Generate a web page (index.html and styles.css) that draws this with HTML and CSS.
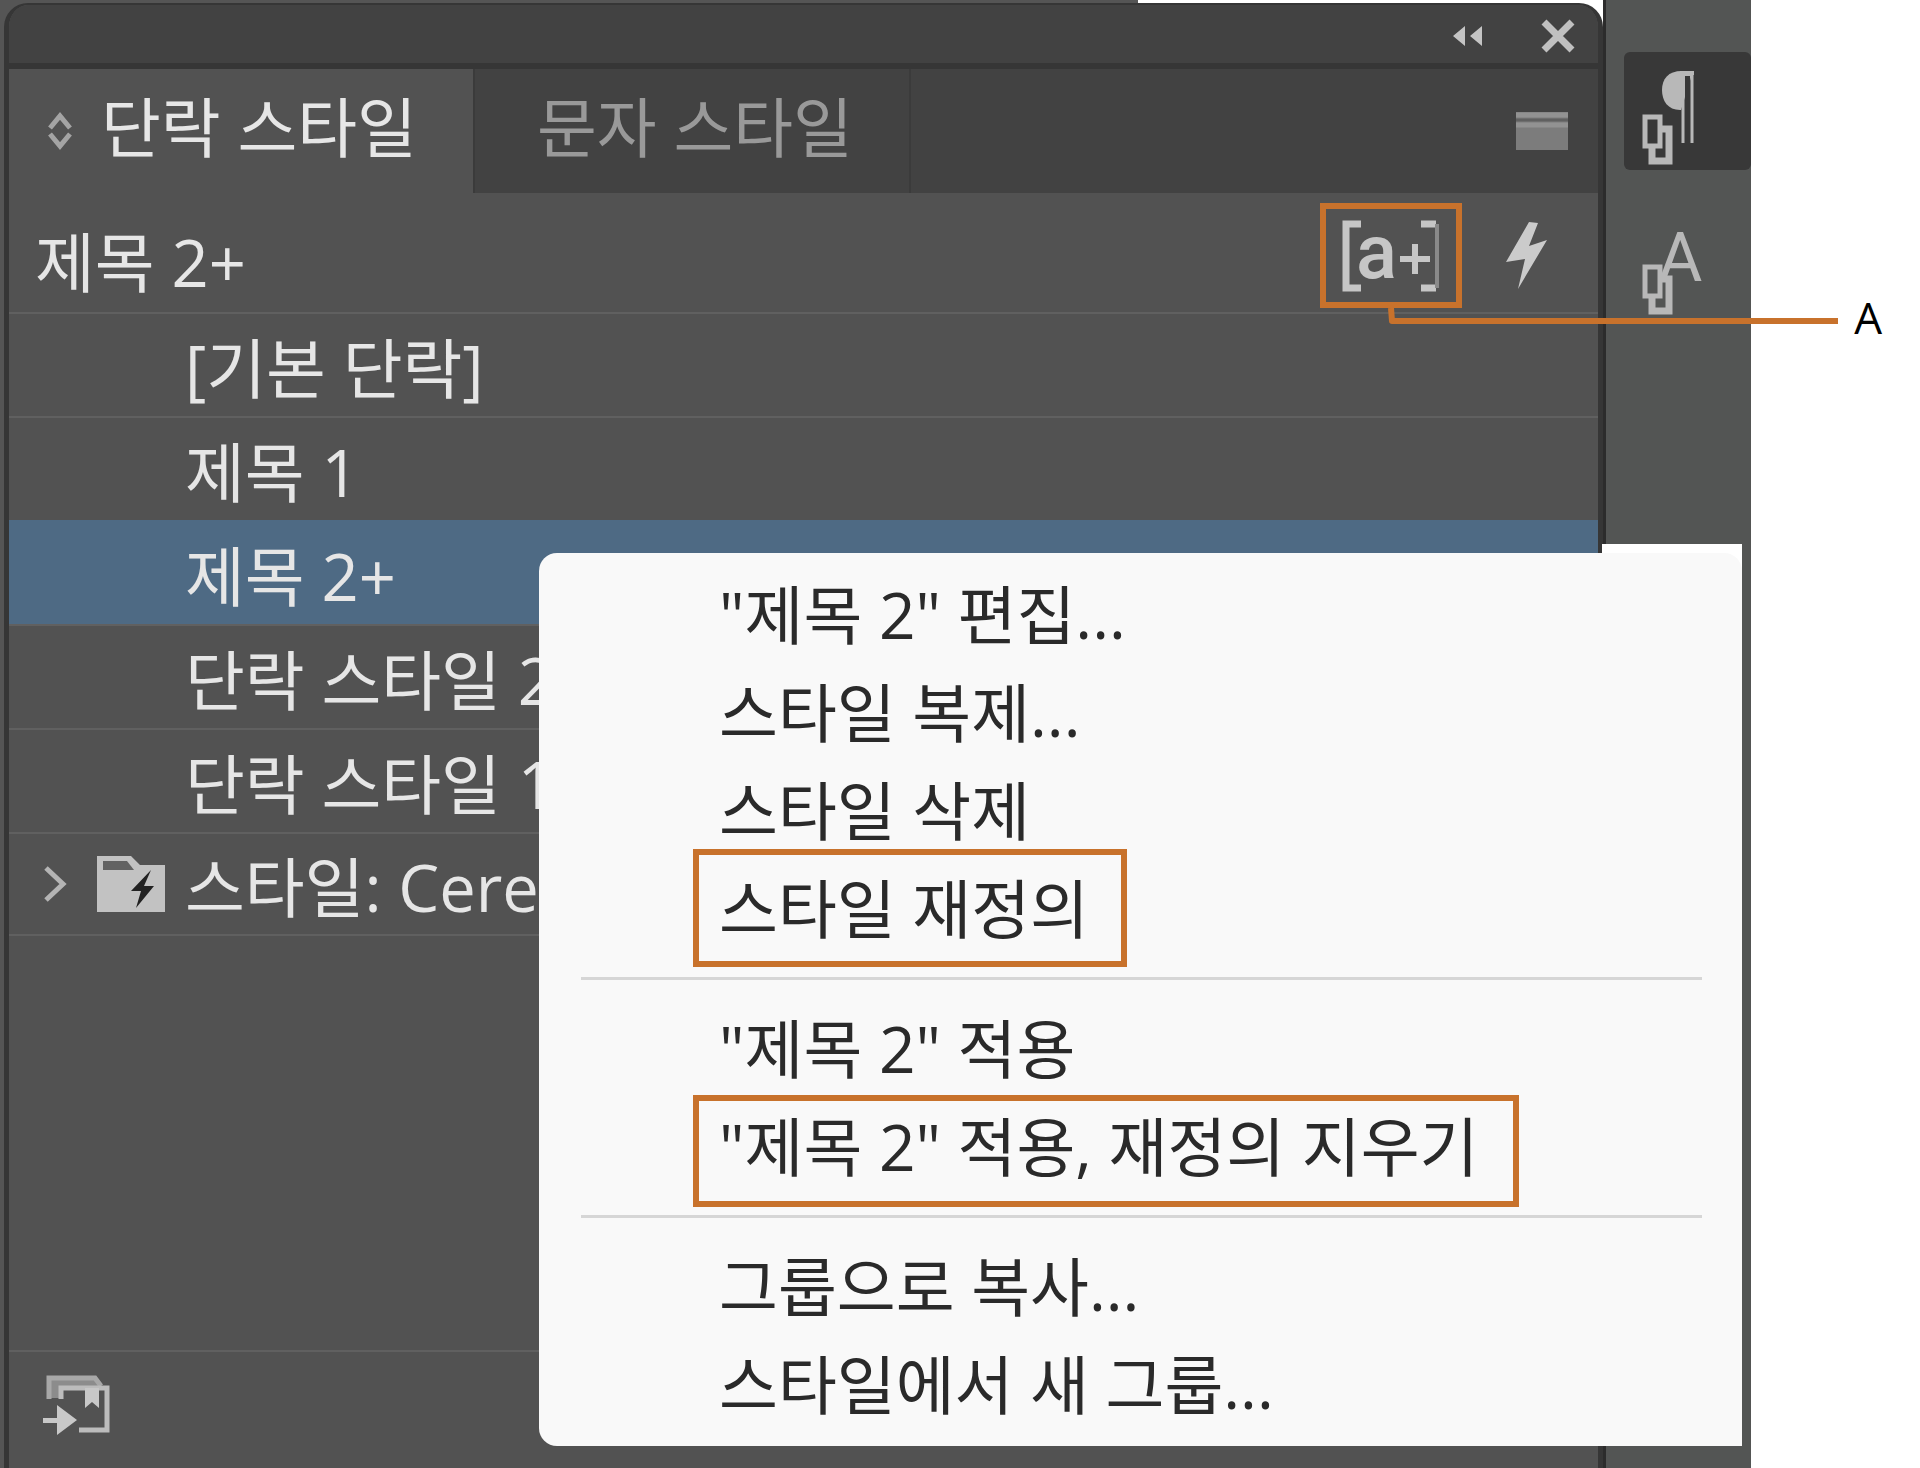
FILE: index.html
```html
<!DOCTYPE html>
<html lang="ko">
<head>
  <meta charset="UTF-8">
  <title>단락 스타일</title>
  <link rel="stylesheet" href="styles.css">
</head>
<body>
  <div class="workspace">
    <section class="panel">
      <header class="titlebar">
        <button aria-label="축소">
          <svg width="32" height="20" viewBox="0 0 32 20"><path d="M13 0v20L1 10zM30 0v20L18 10z" fill="#c4c4c4"/></svg>
        </button>
        <button aria-label="닫기">
          <svg width="36" height="34" viewBox="0 0 36 34"><path d="M4 3l28 28M32 3L4 31" stroke="#c0c0c0" stroke-width="7"/></svg>
        </button>
      </header>

      <nav class="tabs">
        <button class="tab active">
          <svg width="26" height="38" viewBox="0 0 26 38"><path d="M3 16L13 4l10 12M3 22l10 12 10-12" fill="none" stroke="#a4a4a4" stroke-width="5"/></svg>
          <span>단락 스타일</span>
        </button>
        <button class="tab"><span>문자 스타일</span></button>
        <button class="panel-menu" aria-label="패널 메뉴">
          <svg width="52" height="38" viewBox="0 0 52 38">
            <path d="M0 0h52v38H0z" fill="#7c7c7c"/>
            <path d="M0 3h52M0 13h52" stroke="#929292" stroke-width="5"/>
            <path d="M0 8h52" stroke="#606060" stroke-width="3"/>
          </svg>
        </button>
      </nav>

      <div class="current">
        <span class="current-name">제목 2+</span>
        <button class="override" aria-label="스타일 재정의 강조">
          <svg width="96" height="76" viewBox="0 0 96 76">
            <path d="M18 6H3v64h15M78 6h15M78 70h15" fill="none" stroke="#c6c6c6" stroke-width="7"/>
            <path d="M94 6v64" stroke="#8a8a8a" stroke-width="4"/>
            <path d="M57 41h30M72 26v30" stroke="#c6c6c6" stroke-width="6"/>
            <text x="13" y="60" class="icon-a">a</text>
          </svg>
        </button>
        <button class="quick" aria-label="빠른 적용">
          <svg width="42" height="68" viewBox="0 0 42 68"><path d="M23 0L0 40l19-3-7 30L41 18l-18 6L32 1z" fill="#cbcbcb"/></svg>
        </button>
      </div>

      <ul class="styles">
        <li><button>[기본 단락]</button></li>
        <li><button>제목 1</button></li>
        <li><button class="selected">제목 2+</button></li>
        <li><button>단락 스타일 2</button></li>
        <li><button>단락 스타일 1</button></li>
        <li>
          <button class="group">
            <svg class="chevron" width="24" height="38" viewBox="0 0 24 38"><path d="M3 3l17 16L3 35" fill="none" stroke="#b4b4b4" stroke-width="5"/></svg>
            <svg class="folder" width="68" height="56" viewBox="0 0 68 56">
              <path d="M0 0h34l9 9h25v47H0z" fill="#c2c2c2"/>
              <path d="M6 5h24l7 9H6z" fill="#626262"/>
              <path d="M54 14L34 35h10l-5 17 18-22H47z" fill="#222"/>
            </svg>
            스타일: Cerem
          </button>
        </li>
      </ul>

      <footer class="panel-footer">
        <button aria-label="CC 라이브러리에 추가">
          <svg width="68" height="62" viewBox="0 0 68 62">
            <path d="M6 24V4h46l6 8H17v12z" fill="#8c8c8c"/>
            <path d="M6 25V4h46l6 8" fill="none" stroke="#a8a8a8" stroke-width="5"/>
            <path d="M18 25V14h46v42H36" fill="none" stroke="#bcbcbc" stroke-width="5"/>
            <path d="M42 14h14v20l-7-6-7 6z" fill="#c8c8c8"/>
            <path d="M0 44h14V31l20 15-20 15V49H0z" fill="#c8c8c8"/>
          </svg>
        </button>
      </footer>
    </section>

    <aside class="dock">
      <button class="on" aria-label="단락 스타일">
        <svg width="60" height="104" viewBox="0 0 60 104">
          <path d="M53 6H42C28 6 22 14 22 25s6 20 18 20h1z" fill="#b8b8b8"/>
          <path d="M43 6v72M52 6v72" stroke="#b8b8b8" stroke-width="3"/>
          <path d="M40 8h14" stroke="#b8b8b8" stroke-width="4"/>
          <path d="M45 11h5v64h-5z" fill="#383838"/>
          <path d="M21 64h8v32H12V82" fill="none" stroke="#b8b8b8" stroke-width="7"/>
          <path d="M5 52h15v29H5z" fill="#383838" stroke="#b8b8b8" stroke-width="5"/>
        </svg>
      </button>
      <button aria-label="문자 스타일">
        <svg width="60" height="104" viewBox="0 0 60 104">
          <text x="18" y="66" class="dock-a">A</text>
          <path d="M21 64h8v32H12V82" fill="none" stroke="#b8b8b8" stroke-width="7"/>
          <path d="M5 52h15v29H5z" fill="#535554" stroke="#b8b8b8" stroke-width="5"/>
        </svg>
      </button>
    </aside>

    <!-- 오른쪽 클릭 메뉴 -->
    <div class="menu-backing"></div>
    <div class="menu">
      <button>"제목 2" 편집...</button>
      <button>스타일 복제...</button>
      <button>스타일 삭제</button>
      <button class="marked">스타일 재정의</button>
      <hr>
      <button>"제목 2" 적용</button>
      <button class="marked wide">"제목 2" 적용, 재정의 지우기</button>
      <hr>
      <button>그룹으로 복사...</button>
      <button>스타일에서 새 그룹...</button>
    </div>
  </div>

  <!-- 설명선 -->
  <div class="callout">
    <svg class="leader" width="450" height="20" viewBox="0 0 450 20"><path d="M3 0l1 13h446" fill="none" stroke="#c8722c" stroke-width="6" stroke-linejoin="round"/></svg>
    <span>A</span>
  </div>
</body>
</html>
```
FILE: styles.css
```css
* {
  box-sizing: border-box;
}

body {
  margin: 0;
  background: #fff;
  font-family: "Open Sans", "Noto Sans CJK KR", sans-serif;
  font-size: 64px;
  position: relative;
}

button {
  border: none;
  padding: 0;
  margin: 0;
  background: none;
  font: inherit;
  color: inherit;
  text-align: left;
  white-space: nowrap;
  cursor: pointer;
}

svg {
  display: block;
  flex: none;
  overflow: visible;
}

.workspace {
  position: relative;
  display: flex;
  min-height: 100vh;
  margin-right: 169px;
  background: linear-gradient(90deg, #555 65%, #fff 65%);
}

/* 패널 */
.panel {
  flex: 1;
  display: flex;
  flex-direction: column;
  margin: 3px 0 0 4px;
  background: #525252;
  border: solid #363636;
  border-width: 2px 5px 0;
  border-radius: 24px 24px 0 0;
  overflow: hidden;
  color: #e6e6e6;
  font-size: 65px;
}

.titlebar {
  height: 64px;
  display: flex;
  justify-content: flex-end;
  align-items: center;
  gap: 56px;
  padding: 4px 22px 0 0;
  background: #424242;
  border-bottom: 6px solid #363636;
}

.tabs {
  height: 124px;
  display: flex;
  background: #424242;
}

.tab {
  display: flex;
  align-items: center;
  gap: 28px;
  padding: 0 56px 0 62px;
  border-right: 2px solid #3b3b3b;
  color: #999;
}

.tab.active {
  padding-left: 38px;
  background: #525252;
  color: #e6e6e6;
}

.tab span {
  padding-bottom: 14px;
}

.panel-menu {
  margin-left: auto;
  margin-right: 30px;
}

.current {
  height: 119px;
  display: flex;
  align-items: center;
  padding: 6px 50px 0 26px;
}

.current-name {
  flex: 1;
  padding-top: 6px;
}

.override {
  width: 142px;
  height: 105px;
  display: flex;
  align-items: center;
  justify-content: center;
  border: 6px solid #c8722c;
}

.quick {
  margin-left: 44px;
}

.icon-a {
  font: 500 76px Roboto, sans-serif;
  fill: #c6c6c6;
}

.styles {
  list-style: none;
  margin: 0;
  padding: 0;
  flex: 1;
}

.styles button {
  width: 100%;
  height: 104px;
  display: flex;
  align-items: center;
  padding: 0 0 0 176px;
  border-top: 2px solid #606060;
}

.styles .selected {
  background: #4e6a84;
  border-top-color: #4e6a84;
}

.styles .group {
  padding: 0 0 0 34px;
  border-bottom: 2px solid #606060;
}

.folder {
  margin: 0 20px 0 30px;
}

.panel-footer {
  height: 118px;
  display: flex;
  align-items: flex-start;
  padding: 22px 34px;
  border-top: 2px solid #606060;
}

/* 오른쪽 아이콘 도크 */
.dock {
  width: 148px;
  display: flex;
  flex-direction: column;
  gap: 32px;
  padding: 52px 0 0 18px;
  background: #535554;
  border-left: 3px solid #2c2c2c;
}

.dock button {
  height: 118px;
  padding: 12px 0 0 16px;
  border-radius: 6px;
}

.dock .on {
  background: #383838;
}

.dock-a {
  font: 68px Roboto, sans-serif;
  fill: #b8b8b8;
}

/* 컨텍스트 메뉴 */
.menu-backing {
  position: absolute;
  top: 544px;
  right: 9px;
  width: 140px;
  height: 40px;
  background: #fff;
}

.menu {
  position: absolute;
  top: 553px;
  left: 539px;
  right: 9px;
  display: flex;
  flex-direction: column;
  align-items: flex-start;
  padding: 12px 40px 13px 180px;
  background: #f9f9f9;
  border-radius: 18px 18px 0 18px;
  color: #2a2a2a;
}

.menu button {
  position: relative;
  height: 98px;
  padding-bottom: 8px;
}

.menu hr {
  align-self: stretch;
  height: 3px;
  margin: 20px 0 19px -138px;
  border: none;
  background: #d6d6d6;
}

.menu .marked::after {
  content: "";
  position: absolute;
  inset: -10px -38px -10px -26px;
  border: 6px solid #c8722c;
}

.menu .wide::after {
  inset: -2px -41px -12px -26px;
}

.callout {
  position: absolute;
  top: 308px;
  right: 38px;
  display: flex;
  gap: 16px;
  color: #000;
  font-size: 44px;
  line-height: 18px;
}
```
